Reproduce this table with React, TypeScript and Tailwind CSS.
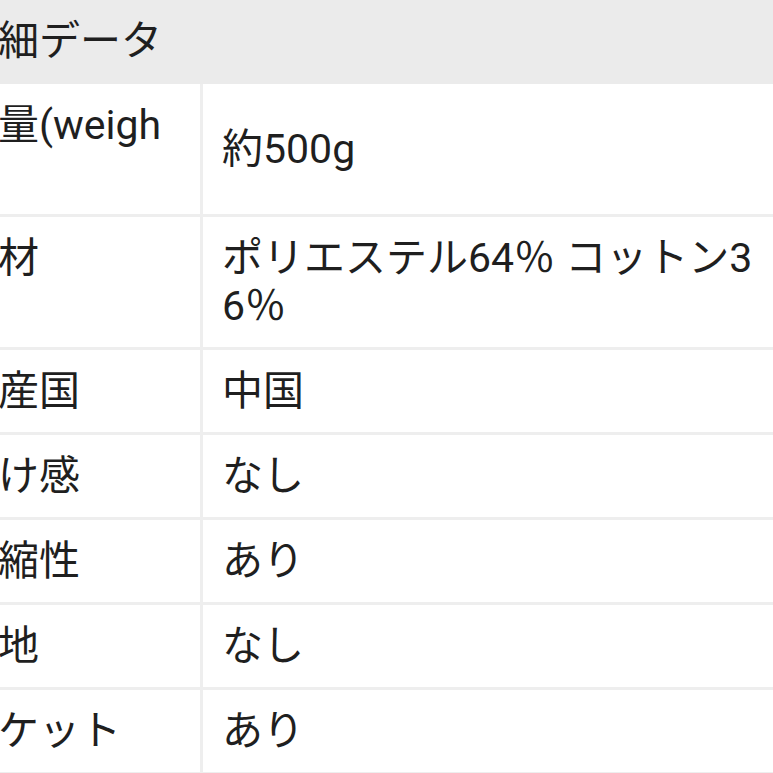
const rows = [
  { label: "重量(weight)", value: "約500g" },
  { label: "素材", value: "ポリエステル64％ コットン36％" },
  { label: "原産国", value: "中国" },
  { label: "透け感", value: "なし" },
  { label: "伸縮性", value: "あり" },
  { label: "裏地", value: "なし" },
  { label: "ポケット", value: "あり" },
];

export default function App() {
  return (
    <div className="h-[773px] w-[773px] overflow-hidden bg-white font-['Roboto','Noto_Sans_CJK_JP',sans-serif] text-[41px] leading-[48px] text-[#1f1f1f]">
      <div className="-ml-[62px] w-[860px] break-all">
        <div className="flex h-[84px] items-center bg-[#ebebeb] pb-[2px] pl-[19px]">詳細データ</div>
        {rows.map((r) => (
          <div key={r.label} className="flex border-b-[3px] border-[#eeeeee]">
            <div className="w-[265px] shrink-0 border-r-[3px] border-[#eeeeee] py-[17px] pl-[19px] pr-[20px]">
              {r.label}
            </div>
            <div className="flex flex-1 items-center py-[17px] pl-[19px] pr-[18px]">
              <span>{r.value}</span>
            </div>
          </div>
        ))}
      </div>
    </div>
  );
}
